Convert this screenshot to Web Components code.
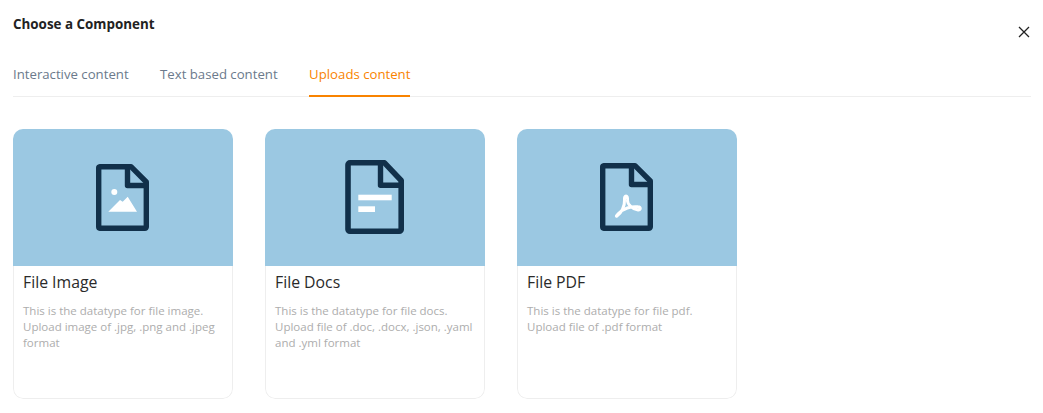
<!DOCTYPE html>
<html>
<head>
<meta charset="utf-8">
<title>Choose a Component</title>
<style>
    body {
        margin: 0;
        background: #fff;
        font-family: "Open Sans", "Noto Sans", sans-serif;
    }
</style>
</head>
<body>
<component-dialog heading="Choose a Component">
    <tab-item slot="tabs">Interactive content</tab-item>
    <tab-item slot="tabs">Text based content</tab-item>
    <tab-item slot="tabs" active>Uploads content</tab-item>

    <component-card heading="File Image">
        <svg slot="icon" width="53" height="67" viewBox="0 0 53 67">
            <path d="M4 2.7H35L50.3 18V63a1.5 1.5 0 0 1-1.500 1.300H4A1.500 1.300 0 0 1 2.700 63V4A1.500 1.300 0 0 1 4 2.700Z" fill="none" stroke="#11304a" stroke-width="5.400" stroke-linejoin="round"/>
            <path d="M31.500 3V21.500H50" fill="none" stroke="#11304a" stroke-width="5.400" stroke-linejoin="round"/>
            <circle cx="18.300" cy="28" r="3" fill="#fff"/>
            <path d="M12.300 47.700L24 36L26.700 37.700L31.700 32.700L41 47.700Z" fill="#fff"/>
        </svg>
        This is the datatype for file image. Upload image of .jpg, .png and .jpeg format
    </component-card>

    <component-card heading="File Docs">
        <svg slot="icon" style="margin-bottom: 1px" width="59" height="74" viewBox="0 0 59 74">
            <path d="M5 2.800H39.500L56.200 20.500V69a2 2 0 0 1-2 2.200H5a2 2 0 0 1-2-2.200V4.800A2 2 0 0 1 5 2.800Z" fill="none" stroke="#11304a" stroke-width="5.600" stroke-linejoin="round"/>
            <path d="M35.500 3V25.200H56" fill="none" stroke="#11304a" stroke-width="5.400" stroke-linejoin="round"/>
            <rect x="13.300" y="34.700" width="33.400" height="5.600" fill="#fff"/>
            <rect x="13.300" y="46.300" width="16.700" height="5.700" fill="#fff"/>
        </svg>
        This is the datatype for file docs. Upload file of .doc, .docx, .json, .yaml and .yml format
    </component-card>

    <component-card heading="File PDF">
        <svg slot="icon" style="margin-bottom: 1px" width="53" height="68" viewBox="0 0 53 68">
            <path d="M4 2.700H35L50.300 18V64a1.500 1.300 0 0 1-1.500 1.300H4A1.500 1.300 0 0 1 2.700 64V4A1.500 1.300 0 0 1 4 2.700Z" fill="none" stroke="#11304a" stroke-width="5.400" stroke-linejoin="round"/>
            <path d="M31.500 3V21.500H50" fill="none" stroke="#11304a" stroke-width="5.400" stroke-linejoin="round"/>
            <path d="M17 53C21 50.500 25 43 24.500 37C24 31.500 28 31.500 27.500 37C27 41 33 46.500 38 47C41 47.300 41 44 38 43.800C31 43 23 45.500 18.500 50.500C16.500 52.800 15.800 53.800 17 53Z" fill="none" stroke="#fff" stroke-width="3" stroke-linejoin="round"/>
        </svg>
        This is the datatype for file pdf. Upload file of .pdf format
    </component-card>
</component-dialog>

<script>
class ComponentDialog extends HTMLElement {
    constructor() {
        super()
        this.attachShadow({mode: "open"})
        this.shadowRoot.innerHTML = `
            <style>
                :host {
                    display: block;
                    padding: 15px 12px 0 13px;
                }
                header {
                    display: flex;
                    justify-content: space-between;
                    height: 37px;
                }
                h1 {
                    margin: 0;
                    font-size: 13.400px;
                    line-height: 18px;
                    font-weight: 700;
                    color: #222;
                }
                svg {
                    margin: 11px 1px 0 0;
                }
                nav {
                    display: flex;
                    gap: 31.500px;
                    border-bottom: 1px solid #eee;
                }
                .cards {
                    display: flex;
                    gap: 32px;
                    padding-top: 32px;
                }
            </style>
            <header>
                <h1 id="heading"></h1>
                <svg width="12" height="12" viewBox="0 0 12 12">
                    <path d="M1 1L11 11M11 1L1 11" stroke="#222" stroke-width="1.300"/>
                </svg>
            </header>
            <nav><slot name="tabs"></slot></nav>
            <div class="cards"><slot></slot></div>
        `
    }

    connectedCallback() {
        this.shadowRoot.querySelector("#heading").textContent = this.getAttribute("heading")
    }
}

class TabItem extends HTMLElement {
    constructor() {
        super()
        this.attachShadow({mode: "open"})
        this.shadowRoot.innerHTML = `
            <style>
                :host {
                    display: block;
                    height: 45px;
                    box-sizing: border-box;
                    margin-bottom: -1px;
                    font-size: 13.200px;
                    line-height: 18px;
                    padding-top: 13px;
                    color: #6b7a8c;
                }
                :host([active]) {
                    color: #f98300;
                    border-bottom: 2px solid #f98300;
                }
            </style>
            <slot></slot>
        `
    }
}

class ComponentCard extends HTMLElement {
    constructor() {
        super()
        this.attachShadow({mode: "open"})
        this.shadowRoot.innerHTML = `
            <style>
                :host {
                    display: block;
                    width: 220px;
                    height: 270px;
                    border-radius: 10px;
                    overflow: hidden;
                }
                .banner {
                    display: flex;
                    align-items: center;
                    justify-content: center;
                    height: 137px;
                    background: #9bc8e2;
                }
                ::slotted(svg) {
                    margin-right: 1px;
                }
                .body {
                    box-sizing: border-box;
                    height: 133px;
                    border: 1px solid #eee;
                    border-top: 0;
                    border-radius: 0 0 10px 10px;
                }
                h2 {
                    margin: 0;
                    padding: 6px 9px 0;
                    font-size: 15.800px;
                    line-height: 20px;
                    font-weight: 500;
                    color: #2a2a2a;
                }
                p {
                    margin: 0;
                    padding: 11px 9px 0;
                    font-size: 11.500px;
                    line-height: 16px;
                    color: #adadad;
                }
            </style>
            <div class="banner"><slot name="icon"></slot></div>
            <div class="body">
                <h2 id="heading"></h2>
                <p><slot></slot></p>
            </div>
        `
    }

    connectedCallback() {
        this.shadowRoot.querySelector("#heading").textContent = this.getAttribute("heading")
    }
}

window.customElements.define("component-dialog", ComponentDialog)
window.customElements.define("tab-item", TabItem)
window.customElements.define("component-card", ComponentCard)
</script>
</body>
</html>
